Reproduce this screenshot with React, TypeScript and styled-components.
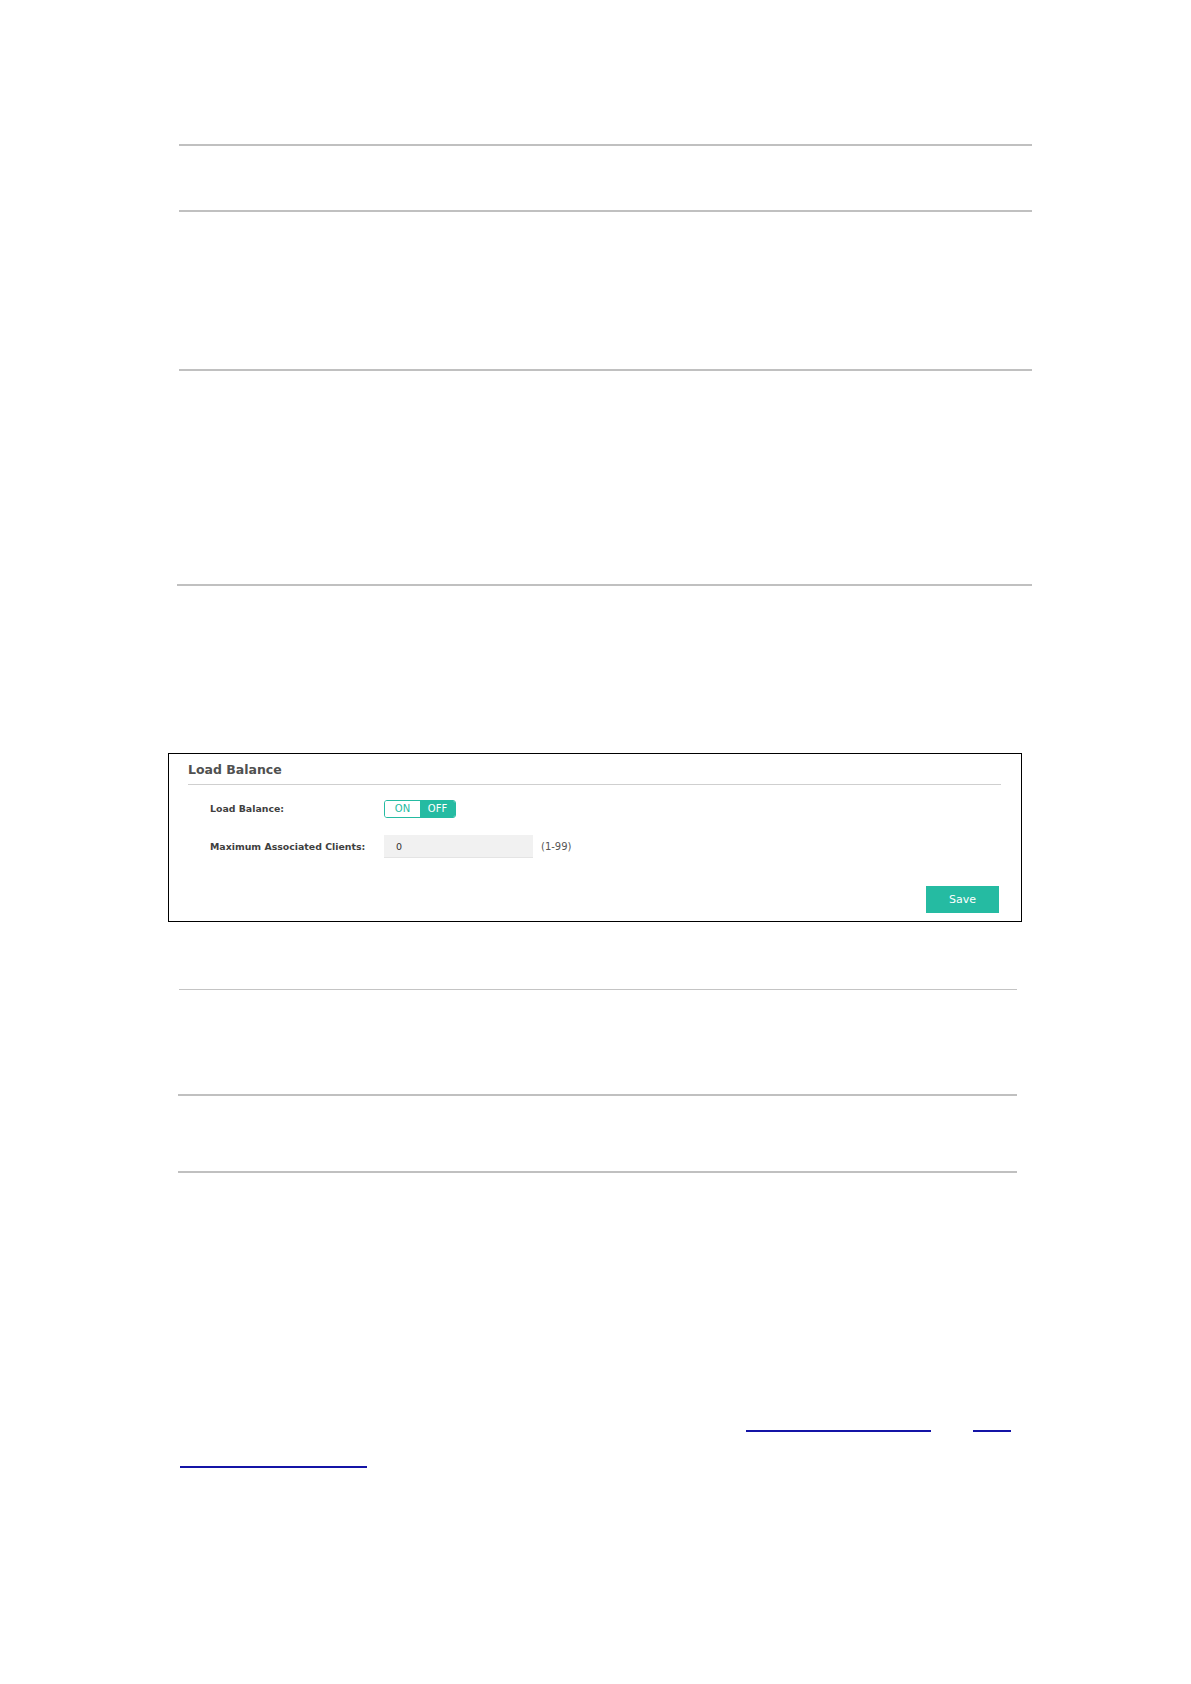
import { FC } from "react";
import styled, { createGlobalStyle } from "styled-components";

const GlobalStyle = createGlobalStyle`
  html, body {
    margin: 0;
    padding: 0;
    background: #fff;
  }
  body {
    font-family: "DejaVu Sans", Verdana, sans-serif;
  }
`;

const Page = styled.main`
  width: 1191px;
  min-height: 1684px;
  background: #fff;
  display: flex;
  flex-direction: column;
  align-items: flex-start;
`;

const Rule = styled.div<{ $top: number; $left: number; $width: number; $thick?: number; $tone?: string }>`
  margin-top: ${(p) => p.$top}px;
  margin-left: ${(p) => p.$left}px;
  width: ${(p) => p.$width}px;
  height: ${(p) => p.$thick || 2}px;
  background: ${(p) => p.$tone || "#c0c0c0"};
  flex-shrink: 0;
`;

const Panel = styled.section`
  margin-top: 167px;
  margin-left: 168px;
  width: 854px;
  height: 169px;
  box-sizing: border-box;
  border: 1px solid #000;
  padding: 8px 20px 8px 19px;
  display: flex;
  flex-direction: column;
`;

const PanelTitle = styled.h2`
  margin: 0;
  padding: 0 0 6px;
  font-size: 12.5px;
  line-height: 16px;
  font-weight: bold;
  color: #505050;
  border-bottom: 1px solid #cfcfcf;
`;

const FieldRow = styled.div<{ $gap: number }>`
  margin-top: ${(p) => p.$gap}px;
  padding-left: 22px;
  height: 23px;
  display: flex;
  align-items: center;
`;

const FieldLabel = styled.label`
  width: 174px;
  flex-shrink: 0;
  font-size: 9.4px;
  font-weight: bold;
  color: #3f3f3f;
`;

const Toggle = styled.div`
  display: flex;
  width: 72px;
  height: 18px;
  box-sizing: border-box;
  border: 1px solid #25bba2;
  border-radius: 3px;
  overflow: hidden;
`;

const ToggleHalf = styled.span<{ $active?: boolean }>`
  flex: 1;
  display: flex;
  align-items: center;
  justify-content: center;
  font-size: 10px;
  color: ${(p) => (p.$active ? "#fff" : "#25bba2")};
  background: ${(p) => (p.$active ? "#25bba2" : "#fff")};
`;

const NumberBox = styled.div`
  width: 149px;
  height: 23px;
  box-sizing: border-box;
  padding-left: 12px;
  display: flex;
  align-items: center;
  background: #f1f1f1;
  border-bottom: 1px solid #e4e4e4;
  font-size: 9.5px;
  color: #333;
`;

const Hint = styled.span`
  margin-left: 8px;
  font-size: 10px;
  color: #555;
`;

const ActionBar = styled.div`
  margin-top: auto;
  display: flex;
  justify-content: flex-end;
  padding-right: 2px;
`;

const SaveButton = styled.button`
  width: 73px;
  height: 27px;
  border: none;
  border-radius: 0;
  background: #25bba2;
  color: #fff;
  font-family: "DejaVu Sans", Verdana, sans-serif;
  font-size: 11px;
  padding: 0;
`;

const LinkLine = styled.div<{ $gap: number; $left: number }>`
  margin-top: ${(p) => p.$gap}px;
  margin-left: ${(p) => p.$left}px;
  display: flex;
`;

const Underline = styled.a<{ $width: number; $skip?: number }>`
  display: block;
  width: ${(p) => p.$width}px;
  margin-left: ${(p) => p.$skip || 0}px;
  height: 2px;
  background: #1414a6;
`;

const LoadBalancePanel: FC = () => (
  <Panel>
    <PanelTitle>Load Balance</PanelTitle>
    <FieldRow $gap={12}>
      <FieldLabel>Load Balance:</FieldLabel>
      <Toggle>
        <ToggleHalf>ON</ToggleHalf>
        <ToggleHalf $active>OFF</ToggleHalf>
      </Toggle>
    </FieldRow>
    <FieldRow $gap={15}>
      <FieldLabel>Maximum Associated Clients:</FieldLabel>
      <NumberBox>0</NumberBox>
      <Hint>(1-99)</Hint>
    </FieldRow>
    <ActionBar>
      <SaveButton>Save</SaveButton>
    </ActionBar>
  </Panel>
);

export default function App() {
  return (
    <Page>
      <GlobalStyle />
      <Rule $top={144} $left={179} $width={853} />
      <Rule $top={64} $left={179} $width={853} />
      <Rule $top={157} $left={179} $width={853} />
      <Rule $top={213} $left={177} $width={855} />
      <LoadBalancePanel />
      <Rule $top={67} $left={179} $width={838} $thick={1} $tone="#c4c4c4" />
      <Rule $top={104} $left={178} $width={839} />
      <Rule $top={75} $left={178} $width={839} />
      <LinkLine $gap={257} $left={746}>
        <Underline $width={185} />
        <Underline $width={38} $skip={42} />
      </LinkLine>
      <LinkLine $gap={34} $left={180}>
        <Underline $width={187} />
      </LinkLine>
    </Page>
  );
}
